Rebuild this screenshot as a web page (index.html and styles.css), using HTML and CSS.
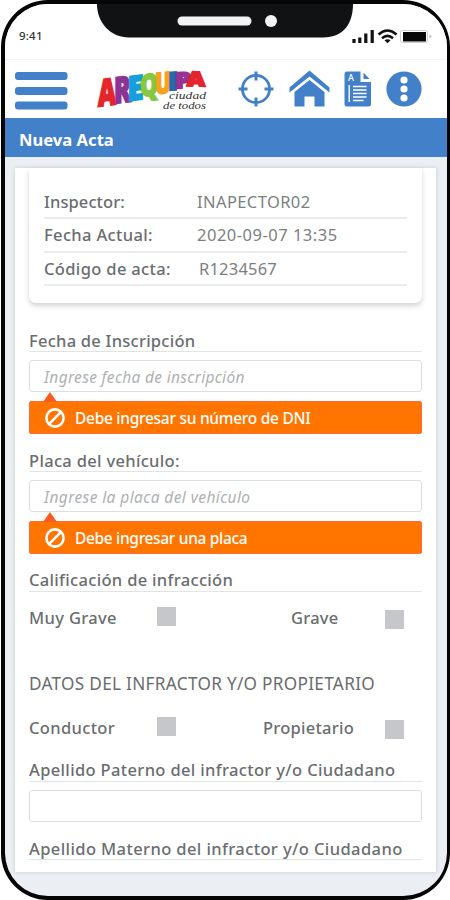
FILE: index.html
```
<!DOCTYPE html>
<html lang="es">
<head>
<meta charset="utf-8">
<title>Nueva Acta</title>
<link rel="stylesheet" href="styles.css">
</head>
<body>
<div class="phone">
  <svg class="notch" width="264" height="40" viewBox="0 0 264 40"><path fill="#111213" d="M0 0H264V4H257C257 23 248 37.500 227 37.500H33C15 37.500 1 23 1 4H0Z"/><rect x="81.500" y="16.500" width="74" height="9" rx="4.500" fill="#f1f3f5"/><circle cx="175" cy="21" r="6" fill="#f1f3f5"/></svg>
  <div class="status">
    <span>9:41</span>
    <svg width="82" height="18" viewBox="0 0 82 18"><path d="M3 16v-4M8.800 16v-5.500M14.800 16V6.500M21.200 16V3" stroke="#111" stroke-width="3.200"/><g fill="none" stroke="#111" stroke-width="2.500"><path d="M27.500 7.500Q36.500-.5 45.500 7.500M31 11.300Q36.500 6.500 42 11.300"/></g><path d="M33.500 13.300Q36.500 11 39.500 13.300L36.500 16.300Z" fill="#111"/><rect x="49.500" y="3.500" width="27" height="12" rx="2" fill="#fff" stroke="#ccc"/><rect x="52" y="5" width="23" height="9.500" fill="#070707"/><path d="M78.500 7.500q4 2 0 4z" fill="#bbb"/></svg>
  </div>
  <header class="header">
    <svg class="menu" width="53" height="38" viewBox="0 0 53 38"><g fill="#4380ca"><rect width="52.500" height="8" rx="3" y="0"/><rect y="15" width="52.500" height="8" rx="3"/><rect y="29.500" width="52.500" height="8" rx="3"/></g></svg>
    <svg class="logo" width="114" height="44" viewBox="0 0 114 44">
      <g class="brand">
        <text transform="translate(3 38.500) skewY(-7)" font-size="37" textLength="18" fill="#e4252b" stroke="#e4252b" lengthAdjust="spacingAndGlyphs">A</text>
        <text transform="translate(19 35.500) skewY(-7)" font-size="36" textLength="17" fill="#8d3394" stroke="#8d3394" lengthAdjust="spacingAndGlyphs">R</text>
        <text transform="translate(32.500 33) skewY(-7)" font-size="34" textLength="16" fill="#159fdc" stroke="#159fdc" lengthAdjust="spacingAndGlyphs">E</text>
        <text transform="translate(45 28.500) skewY(-6)" font-size="30" textLength="18" fill="#87c744" stroke="#87c744" lengthAdjust="spacingAndGlyphs">Q</text>
        <text transform="translate(60 26) skewY(-5)" font-size="29" textLength="16" fill="#f7a21b" stroke="#f7a21b" lengthAdjust="spacingAndGlyphs">U</text>
        <text transform="translate(73 22.500) skewY(-5)" font-size="25" textLength="10" fill="#2869ae" stroke="#2869ae" lengthAdjust="spacingAndGlyphs">I</text>
        <text transform="translate(80 20.500) skewY(-3)" font-size="22" textLength="16" fill="#993292" stroke="#993292" lengthAdjust="spacingAndGlyphs">P</text>
        <text transform="translate(92 18) skewY(1)" font-size="20" textLength="18" fill="#e4252b" stroke="#e4252b" lengthAdjust="spacingAndGlyphs">A</text>
      </g>
      <g class="motto"><text x="74" y="31" textLength="37" lengthAdjust="spacingAndGlyphs">ciudad</text><text x="68" y="41" textLength="43" lengthAdjust="spacingAndGlyphs">de todos</text></g>
    </svg>
    <svg class="target" width="36" height="36" viewBox="0 0 36 36" fill="none" stroke="#4380ca"><circle cx="18" cy="18" r="13.600" stroke-width="2.800"/><path d="M18 .5v9M18 26.500v9M.5 18h9M26.500 18h9" stroke-width="3"/></svg>
    <svg class="home" width="41" height="37" viewBox="0 0 41 37" fill="#4380ca"><path d="M.5 17.500 20.500.5 40.500 17.500V22.500L20.500 6.500 .5 22.500Z"/><path d="M5.500 22 20.500 10 35.500 22V36.500H25.500V26.500H15.500V36.500H5.500Z"/></svg>
    <svg class="doc" width="27" height="36" viewBox="0 0 27 36"><path fill="#4380ca" d="M3 .5H16.500V11H27V33q0 2.500-2.500 2.500H3Q.5 35.500.5 33V3Q.5.500 3 .5ZM19.500 1.500 25.500 8H19.500Z"/><text x="4" y="10" class="doc-letter">A</text><path d="M5.200 14v17M9 15.500h13.500M9 19h13.500M9 22.500h13.500M9 26h13.500M9 29.500h10.500" stroke="#fff" stroke-width="1.400"/></svg>
    <svg class="more" width="36" height="36" viewBox="0 0 36 36"><circle cx="18" cy="18" r="17.600" fill="#4380ca"/><g fill="#fff"><circle cx="18" cy="9" r="3.600"/><circle cx="18" cy="18" r="3.600"/><circle cx="18" cy="27" r="3.600"/></g></svg>
  </header>
  <h1 class="title">Nueva Acta</h1>
  <main class="content">
    <section class="info">
      <div class="info-row"><span class="k1">Inspector:</span><span class="value v1">INAPECTOR02</span></div>
      <div class="info-row"><span class="k2">Fecha Actual:</span><span class="value v2">2020-09-07 13:35</span></div>
      <div class="info-row"><span class="k3">Código de acta:</span><span class="value v3">R1234567</span></div>
    </section>
    <form class="form">
      <div class="label"><span class="l1">Fecha de Inscripción</span></div>
      <div class="input"><span class="p1">Ingrese fecha de inscripción</span></div>
      <div class="error"><svg width="20" height="20" viewBox="0 0 20 20" fill="none" stroke="#fff" stroke-width="2.600"><circle cx="10" cy="10" r="8.600"/><path d="M4.200 15.800 15.800 4.200"/></svg><span class="e1">Debe ingresar su número de DNI</span></div>
      <div class="label"><span class="l2">Placa del vehículo:</span></div>
      <div class="input"><span class="p2">Ingrese la placa del vehículo</span></div>
      <div class="error"><svg width="20" height="20" viewBox="0 0 20 20" fill="none" stroke="#fff" stroke-width="2.600"><circle cx="10" cy="10" r="8.600"/><path d="M4.200 15.800 15.800 4.200"/></svg><span class="e2">Debe ingresar una placa</span></div>
      <div class="label rating"><span class="l3">Calificación de infracción</span></div>
      <div class="checks"><span class="c1">Muy Grave</span><i class="box"></i><span class="c2">Grave</span><i class="box low"></i></div>
      <h2 class="section"><span class="s1">DATOS DEL INFRACTOR Y/O PROPIETARIO</span></h2>
      <div class="checks owner"><span class="c3">Conductor</span><i class="box"></i><span class="c4">Propietario</span><i class="box low"></i></div>
      <div class="label surname"><span class="l4">Apellido Paterno del infractor y/o Ciudadano</span></div>
      <div class="input"></div>
      <div class="label last"><span class="l5">Apellido Materno del infractor y/o Ciudadano</span></div>
    </form>
  </main>
</div>
</body>
</html>
```
FILE: styles.css
```
* { box-sizing: border-box; }
body { margin: 0; background: #fff; font-family: "Noto Sans", sans-serif; font-size: 16.5px; color: #6a6d6f; }
svg { display: block; flex: none; }
span { white-space: nowrap; }
.phone { position: relative; width: 449px; height: 900px; margin-left: 1px; border: 4px solid #050505; border-right-width: 3px; border-radius: 47px; background: #ebeef2; overflow: hidden; }
.notch { position: absolute; left: 91px; top: -4px; }
.status { height: 56px; padding: 23px 14px 0 14px; display: flex; justify-content: space-between; background: #fff; border-bottom: 1px solid #f3f4f5; font-size: 11.5px; font-weight: 500; line-height: 17px; color: #333; letter-spacing: .2px; }
.header { height: 58px; padding: 10px 0 0 10px; display: flex; background: #fff; }
.menu { margin-top: 2px; }
.logo { margin-left: 27px; margin-top: -2px; overflow: visible; }
.brand { font-family: "Open Sans", sans-serif; font-weight: 800; stroke-width: 1.8; }
.motto { font-family: "Liberation Serif", serif; font-style: italic; font-size: 9.5px; fill: #333; }
.target { margin-left: 29px; margin-top: 1px; }
.home { margin-left: 15px; }
.doc { margin-left: 14px; margin-top: 1px; }
.more { margin-left: 15px; margin-top: 1px; }
.doc-letter { font: 500 9px "Noto Sans", sans-serif; fill: #fff; }
.title { margin: 0; height: 39px; padding: 0 15px 0 14px; line-height: 44px; font-size: 16.6px; font-weight: 700; color: #fff; background: #4380ca; }
.content { width: 421px; height: 704px; margin: 11px 0 0 10px; background: #fff; box-shadow: 0 0 4px rgba(70, 80, 90, .22); padding: 0 14px; }
.info { height: 135px; padding: 18px 15px 0; border-radius: 0 0 7px 7px; box-shadow: 0 3px 5px rgba(70, 80, 90, .24); }
.info-row { height: 33.3px; border-bottom: 2px solid #e9ebec; display: grid; grid-template-columns: 153px 1fr; line-height: 31px; font-weight: 500; }
.value { font-weight: 400; color: #7c7f80; }
.v3 { padding-left: 2px; }
.form { margin: 0; padding-top: 25px; }
.label { height: 24px; line-height: 26px; border-bottom: 1px solid #e1e4e6; font-weight: 500; }
.rating { line-height: 24px; }
.input { height: 32px; margin-top: 8px; border: 1px solid #dcdfe1; border-radius: 3px; padding-left: 14px; line-height: 32px; font-size: 15.5px; font-style: italic; color: #aeb1b3; }
.error { position: relative; height: 33px; margin: 9px 0 14px; padding-left: 15px; display: flex; align-items: center; gap: 10px; background: #ff7500; border: 1px solid #ff6a3a; border-radius: 2px; color: #fff; font-size: 15.5px; font-weight: 500; }
.error::before { content: ""; position: absolute; left: 13px; top: -10px; width: 14px; height: 10px; background: #fb5a20; clip-path: polygon(50% 0, 100% 100%, 0 100%); }
.checks { height: 24px; margin-top: 14px; display: grid; grid-template-columns: 128px 134px 94px 20px; line-height: 24px; font-weight: 500; }
.owner { grid-template-columns: 128px 106px 122px 20px; margin-top: 20px; }
.box { width: 19px; height: 19px; margin-top: 1px; background: #c5c7ca; }
.low { margin-top: 4px; }
.section { margin: 42px 0 0; height: 24px; line-height: 24px; font-size: 17.2px; font-weight: 400; }
.surname { margin-top: 18px; line-height: 24px; }
.last { margin-top: 14px; }
.k1 { letter-spacing: .1px; }
.k2, .k3, .c1, .c3, .l4 { letter-spacing: .35px; }
.v1, .p2, .l5 { letter-spacing: .4px; }
.v2 { letter-spacing: .5px; }
.v3 { letter-spacing: .2px; }
.l1, .c2, .c4 { letter-spacing: .25px; }
.p1, .l2, .l3 { letter-spacing: .32px; }
.e1 { letter-spacing: -.28px; }
.e2 { letter-spacing: -.33px; }
.s1 { letter-spacing: .3px; }
```
